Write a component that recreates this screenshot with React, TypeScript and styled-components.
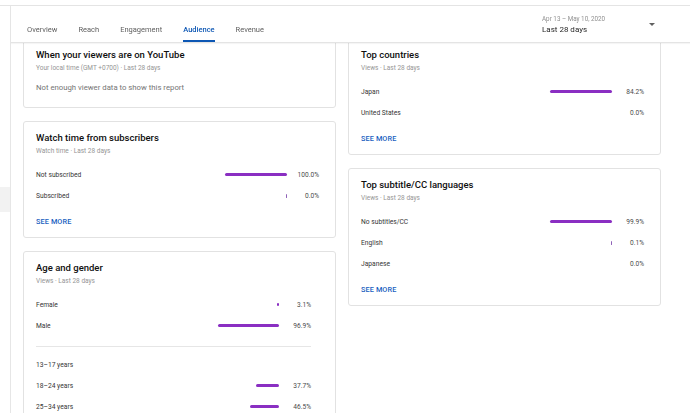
import React, { FC } from 'react';
import styled, { createGlobalStyle } from 'styled-components';

const GlobalStyle = createGlobalStyle`
  html, body {
    margin: 0;
    padding: 0;
    height: 413px;
    overflow: hidden;
    background: #fff;
    font-family: Roboto, 'Noto Sans', Arial, sans-serif;
    color: #0f0f0f;
  }
`;

interface Metric {
  label: string,
  value: string,
  bar: number,
}

const tabs = ['Overview', 'Reach', 'Engagement', 'Audience', 'Revenue'];

const subscribers: Metric[] = [
  { label: 'Not subscribed', value: '100.0%', bar: 62 },
  { label: 'Subscribed', value: '0.0%', bar: 1 },
];

const gender: Metric[] = [
  { label: 'Female', value: '3.1%', bar: 2.5 },
  { label: 'Male', value: '96.9%', bar: 61 },
];

const ages: Metric[] = [
  { label: '13–17 years', value: '', bar: 0 },
  { label: '18–24 years', value: '37.7%', bar: 23 },
  { label: '25–34 years', value: '46.5%', bar: 29 },
];

const countries: Metric[] = [
  { label: 'Japan', value: '84.2%', bar: 62 },
  { label: 'United States', value: '0.0%', bar: 0 },
];

const languages: Metric[] = [
  { label: 'No subtitles/CC', value: '99.9%', bar: 62 },
  { label: 'English', value: '0.1%', bar: 1 },
  { label: 'Japanese', value: '0.0%', bar: 0 },
];

const Rows: FC<{ items: Metric[] }> = ({ items }) => (
  <RowList>
    {items.map(item => (
      <Row key={item.label}>
        <Label>{item.label}</Label>
        <BarSlot>
          {item.bar > 0 && <Bar $thin={item.bar < 2} style={{ width: item.bar }} />}
        </BarSlot>
        <Pct>{item.value}</Pct>
      </Row>
    ))}
  </RowList>
);

const App: FC = () => {
  return (
    <Page>
      <GlobalStyle />
      <TopStrip />
      <Body>
        <Sidebar>
          <SideItem />
        </Sidebar>
        <Main>
          <Header>
            <TabList>
              {tabs.map(tab => (
                <Tab key={tab} $active={tab === 'Audience'}>{tab}</Tab>
              ))}
            </TabList>
            <DateSelector>
              <DateText>
                <DateRange>Apr 13 – May 10, 2020</DateRange>
                <DatePeriod>Last 28 days</DatePeriod>
              </DateText>
              <Caret />
            </DateSelector>
          </Header>

          <Content>
            <Column>
              <Card>
                <Title>When your viewers are on YouTube</Title>
                <Subtitle>Your local time (GMT +0700) · Last 28 days</Subtitle>
                <Message>Not enough viewer data to show this report</Message>
              </Card>
              <Card>
                <Title>Watch time from subscribers</Title>
                <Subtitle>Watch time · Last 28 days</Subtitle>
                <Rows items={subscribers} />
                <SeeMore>SEE MORE</SeeMore>
              </Card>
              <Card $wide>
                <Title>Age and gender</Title>
                <Subtitle>Views · Last 28 days</Subtitle>
                <Rows items={gender} />
                <Divider />
                <Rows items={ages} />
              </Card>
            </Column>

            <Column>
              <Card>
                <Title>Top countries</Title>
                <Subtitle>Views · Last 28 days</Subtitle>
                <Rows items={countries} />
                <SeeMore>SEE MORE</SeeMore>
              </Card>
              <Card>
                <Title>Top subtitle/CC languages</Title>
                <Subtitle>Views · Last 28 days</Subtitle>
                <Rows items={languages} />
                <SeeMore>SEE MORE</SeeMore>
              </Card>
            </Column>
          </Content>
        </Main>
      </Body>
    </Page>
  )
}

const Page = styled.div`
  display: flex;
  flex-direction: column;
  height: 413px;
  overflow: hidden;
`;

const TopStrip = styled.div`
  height: 5px;
  border-bottom: 1px solid #e4e4e4;
  flex-shrink: 0;
`;

const Body = styled.div`
  display: flex;
  flex: 1;
  min-height: 0;
`;

const Sidebar = styled.div`
  width: 10px;
  border-right: 1px solid #e6e6e6;
  flex-shrink: 0;
`;

const SideItem = styled.div`
  margin-top: 181px;
  height: 25px;
  background: #f2f2f2;
`;

const Main = styled.div`
  flex: 1;
  min-width: 0;
`;

const Header = styled.div`
  position: sticky;
  top: 0;
  z-index: 2;
  height: 36px;
  display: flex;
  align-items: flex-end;
  padding-left: 16px;
  background: #fff;
  border-bottom: 1px solid #e4e4e4;
  box-shadow: 0 1px 1px rgba(0, 0, 0, .04);
`;

const TabList = styled.div`
  display: flex;
  gap: 21px;
`;

const Tab = styled.div<{ $active?: boolean }>`
  font-size: 7.5px;
  line-height: 12px;
  padding-bottom: 4px;
  border-bottom: 2px solid ${({ $active }) => $active ? '#0d57b4' : 'transparent'};
  color: ${({ $active }) => $active ? '#0d57b4' : '#606060'};
  font-weight: ${({ $active }) => $active ? 500 : 400};
  white-space: nowrap;
`;

const DateSelector = styled.div`
  align-self: center;
  margin-left: auto;
  margin-right: 35px;
  width: 113px;
  padding-top: 2px;
  display: flex;
  align-items: center;
  justify-content: space-between;
`;

const DateText = styled.div`
  display: flex;
  flex-direction: column;
`;

const DateRange = styled.span`
  font-size: 6.3px;
  line-height: 10px;
  color: #909090;
  white-space: nowrap;
`;

const DatePeriod = styled.span`
  font-size: 8px;
  line-height: 12px;
  color: #282828;
  white-space: nowrap;
`;

const Caret = styled.span`
  width: 0;
  height: 0;
  margin-top: -2px;
  border-left: 3px solid transparent;
  border-right: 3px solid transparent;
  border-top: 3px solid #606060;
`;

const Content = styled.div`
  margin-top: -5px;
  padding-left: 12px;
  display: grid;
  grid-template-columns: 313px 313px;
  column-gap: 12px;
  align-items: start;
`;

const Column = styled.div`
  display: flex;
  flex-direction: column;
  gap: 13px;
`;

const Card = styled.div<{ $wide?: boolean }>`
  background: #fff;
  border: 1px solid #e2e2e2;
  border-radius: 3px;
  padding: 9px ${({ $wide }) => $wide ? 24 : 16}px 9px 12px;
`;

const Title = styled.div`
  font-size: 9.5px;
  line-height: 14px;
  font-weight: 500;
  color: #0f0f0f;
`;

const Subtitle = styled.div`
  font-size: 6.5px;
  line-height: 12px;
  color: #959595;
`;

const Message = styled.div`
  margin: 7px 0 3px;
  font-size: 7.75px;
  line-height: 14px;
  color: #757575;
`;

const RowList = styled.div`
  margin-top: 7px;
`;

const Row = styled.div`
  height: 21px;
  display: flex;
  align-items: center;
`;

const Label = styled.span`
  flex: 1;
  font-size: 6.7px;
  color: #363636;
`;

const BarSlot = styled.div`
  width: 64px;
  display: flex;
  justify-content: flex-end;
`;

const Bar = styled.div<{ $thin?: boolean }>`
  height: ${({ $thin }) => $thin ? 4 : 3.5}px;
  border-radius: 2px;
  background: ${({ $thin }) => $thin ? '#8f62b8' : '#8a2fc2'};
  ${({ $thin }) => $thin && `
    min-width: 1.5px;
    border-radius: 1px;
  `}
`;

const Pct = styled.span`
  width: 32px;
  text-align: right;
  font-size: 6.6px;
  color: #4a4a4a;
`;

const SeeMore = styled.div`
  margin-top: 10px;
  font-size: 7.3px;
  line-height: 12px;
  font-weight: 500;
  color: #1a5fbf;
  letter-spacing: .1px;
`;

const Divider = styled.div`
  margin: 10px 0 7px;
  height: 1px;
  background: #e6e6e6;
`;

export default App;
